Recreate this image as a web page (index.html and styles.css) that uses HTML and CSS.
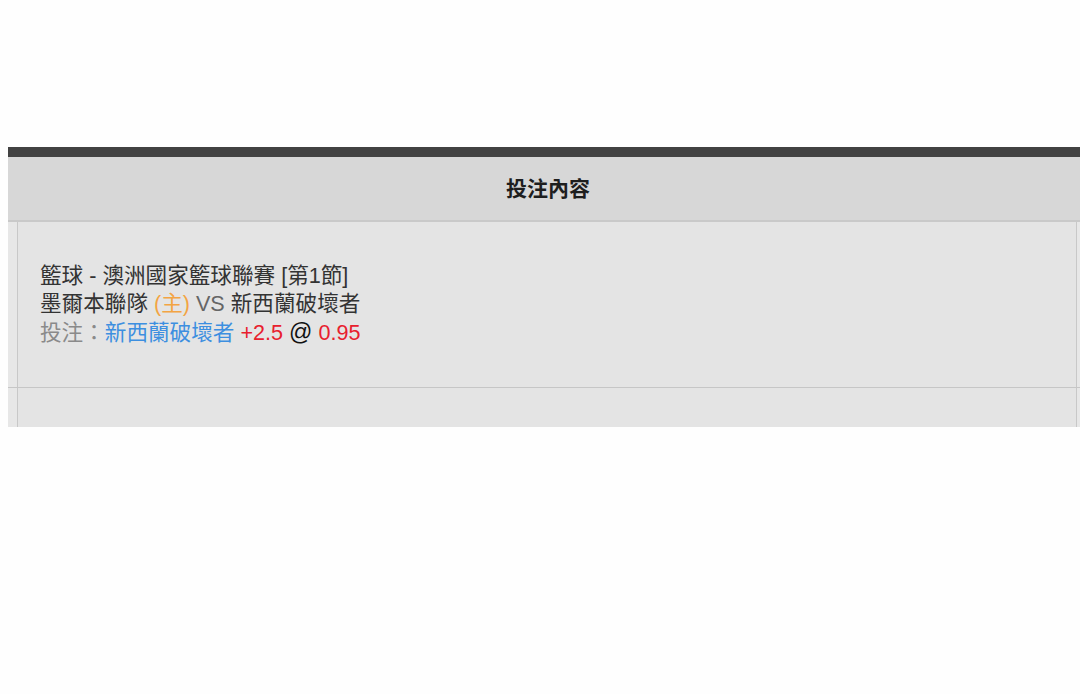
FILE: index.html
```html
<!DOCTYPE html>
<html lang="zh-Hant">
<head>
    <title>投注內容</title>
    <link rel="stylesheet" href="styles.css">
</head>
<body>
    <div class="page">
        <div class="bet-panel">
            <div class="panel-head">投注內容</div>

            <!-- Bet detail row -->
            <div class="bet-row">
                <div class="bet-cell">
                    <div class="line">籃球 - 澳洲國家籃球聯賽 [第1節]</div>
                    <div class="line">墨爾本聯隊 <span class="home">(主)</span> <span class="vs">VS</span> 新西蘭破壞者</div>
                    <div class="line"><span class="label">投注：</span><span class="pick">新西蘭破壞者</span> <span class="odds">+2.5</span> <span class="at">@</span> <span class="odds">0.95</span></div>
                </div>
            </div>

            <div class="bet-row last">
                <div class="bet-cell empty"></div>
            </div>
        </div>
    </div>
</body>
</html>
```

FILE: styles.css
```css
html, body {
    margin: 0;
    overflow: hidden;
    background: #fefefe;
}
.page {
    padding: 147px 0 0 8px;
    font-family: "Liberation Sans", "Noto Sans CJK TC", sans-serif;
}
.bet-panel {
    width: 1080px;
    border-top: 10px solid #424242;
}
.panel-head {
    height: 63px;
    line-height: 63px;
    text-align: center;
    background: #d7d7d7;
    border-bottom: 2px solid #c9c9c9;
    font-size: 21px;
    font-weight: bold;
    color: #1e1e1e;
}
.bet-row {
    padding: 0 11px 0 9px;
    background: #e7e7e7;
    border-bottom: 1px solid #c6c6c6;
}
.bet-row.last {
    border-bottom: none;
}
.bet-cell {
    padding: 40px 22px;
    background: #e4e4e4;
    border-left: 1px solid #c8c8c8;
    border-right: 1px solid #c8c8c8;
    font-size: 21.6px;
    line-height: 28px;
    color: #333;
}
.bet-cell.empty {
    padding: 0;
    height: 39px;
}
.home {
    color: #f3a443;
}
.vs {
    color: #666;
}
.label {
    color: #8a8a8a;
}
.pick {
    color: #3d8fe0;
}
.odds {
    color: #e8202e;
}
.at {
    color: #111;
    font-size: 23px;
}
```
